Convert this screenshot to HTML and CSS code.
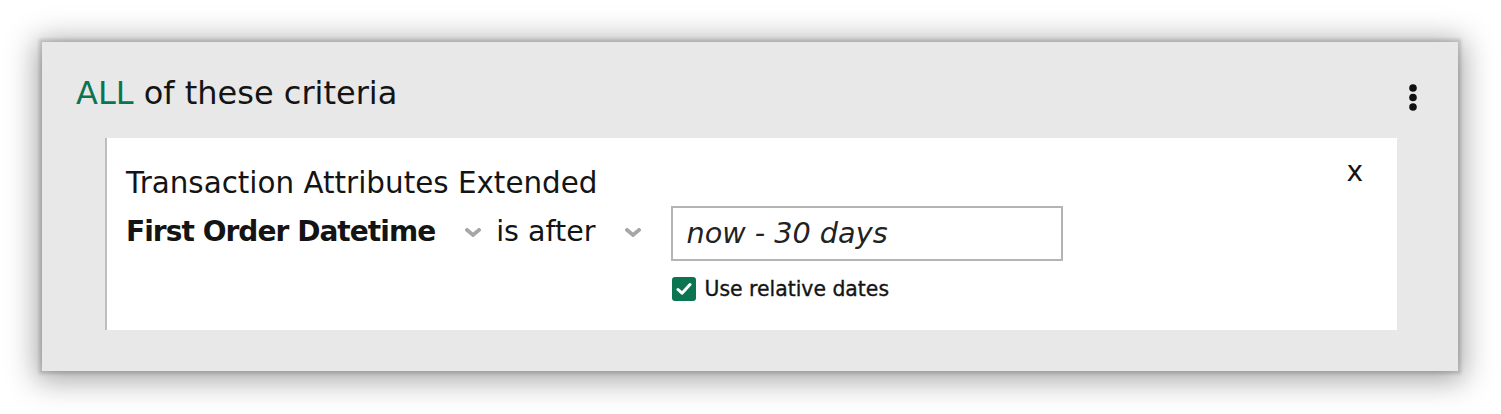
FILE: index.html
```html
<!DOCTYPE html>
<html lang="en">
<head>
<meta charset="utf-8">
<title>Criteria</title>
<link rel="stylesheet" href="styles.css">
</head>
<body>
<section class="panel">
  <header class="panel-head">
    <h2 class="panel-title"><span class="accent">ALL</span> of these criteria</h2>
    <button class="kebab" aria-label="More options">
      <svg width="8" height="27" viewBox="0 0 8 27"><circle cx="4" cy="4" r="3.8"/><circle cx="4" cy="13.5" r="3.8"/><circle cx="4" cy="23" r="3.8"/></svg>
    </button>
  </header>
  <div class="card">
    <div class="card-head">
      <div class="card-title">Transaction Attributes Extended</div>
      <button class="close">x</button>
    </div>
    <div class="rule">
      <div class="select select-field">
        <span class="select-text bold">First Order Datetime</span>
        <svg class="chev" width="16" height="9" viewBox="0 0 16 9"><path d="M2 2 L8 7 L14 2"/></svg>
      </div>
      <div class="select select-op">
        <span class="select-text">is after</span>
        <svg class="chev" width="16" height="9" viewBox="0 0 16 9"><path d="M2 2 L8 7 L14 2"/></svg>
      </div>
      <div class="value">
        <div class="text-input">now - 30 days</div>
        <label class="check">
          <span class="box"><svg width="16" height="14" viewBox="0 0 16 14"><path d="M2 7.5 L6 11.2 L14 2.6"/></svg></span>
          <span class="check-label">Use relative dates</span>
        </label>
      </div>
    </div>
  </div>
</section>
</body>
</html>
```

FILE: styles.css
```css
html, body {
  margin: 0;
  background: #ffffff;
}
body {
  padding: 42px 43px 42px 42px;
  font-family: "DejaVu Sans", "Liberation Sans", sans-serif;
  color: #141414;
}
.panel {
  background: #e8e8e8;
  box-shadow: 0 0 3px 3px rgba(0,0,0,0.15), 0 4px 28px 6px rgba(0,0,0,0.34);
  padding: 31px 41px 41px 34px;
}
.panel-head {
  display: flex;
  justify-content: space-between;
  align-items: flex-start;
}
.panel-title {
  margin: 0;
  font-size: 32px;
  font-weight: normal;
  line-height: 40px;
  color: #141414;
}
.accent {
  color: #0b7552;
}
.kebab {
  margin-top: 11px;
  padding: 0;
  border: 0;
  background: none;
  line-height: 0;
  fill: #111;
}
.card {
  margin: 25px 20px 0 29px;
  background: #ffffff;
  border-left: 2px solid #bdbdbd;
  padding: 28px 34px 29px 19px;
}
.card-head {
  display: flex;
  justify-content: space-between;
  align-items: flex-start;
}
.card-title {
  font-size: 29.4px;
  line-height: 34px;
}
.close {
  margin-top: -11px;
  padding: 0;
  border: 0;
  background: none;
  font-family: "DejaVu Sans", sans-serif;
  font-size: 28px;
  line-height: 34px;
  color: #141414;
}
.rule {
  display: flex;
  align-items: flex-start;
  margin-top: 6px;
}
.select {
  display: flex;
  align-items: center;
  height: 51px;
}
.select-text {
  font-size: 28.5px;
  line-height: 51px;
  white-space: nowrap;
}
.bold {
  font-size: 28px;
  font-weight: bold;
  letter-spacing: -0.95px;
}
.select-field .chev {
  margin-left: 30px;
  margin-top: 2px;
}
.select-op {
  margin-left: 15px;
}
.select-op .chev {
  margin-left: 30px;
  margin-top: 2px;
}
.chev {
  fill: none;
  stroke: #a6a6a6;
  stroke-width: 3.8;
  stroke-linecap: square;
  stroke-linejoin: miter;
}
.value {
  margin-left: 30px;
}
.text-input {
  box-sizing: border-box;
  width: 392px;
  border: 2px solid #b4b4b4;
  padding-left: 13px;
  font-size: 28.7px;
  font-style: italic;
  line-height: 51px;
  color: #222;
}
.check {
  display: flex;
  align-items: center;
  margin-top: 16px;
  margin-left: 1px;
}
.box {
  width: 24px;
  height: 24px;
  border-radius: 3px;
  background: #0b7552;
  display: flex;
  align-items: center;
  justify-content: center;
}
.box svg {
  fill: none;
  stroke: #ffffff;
  stroke-width: 3;
  stroke-linecap: round;
  stroke-linejoin: round;
}
.check-label {
  margin-left: 8px;
  font-size: 20.4px;
  line-height: 24px;
  -webkit-text-stroke: 0.35px #141414;
}
```
